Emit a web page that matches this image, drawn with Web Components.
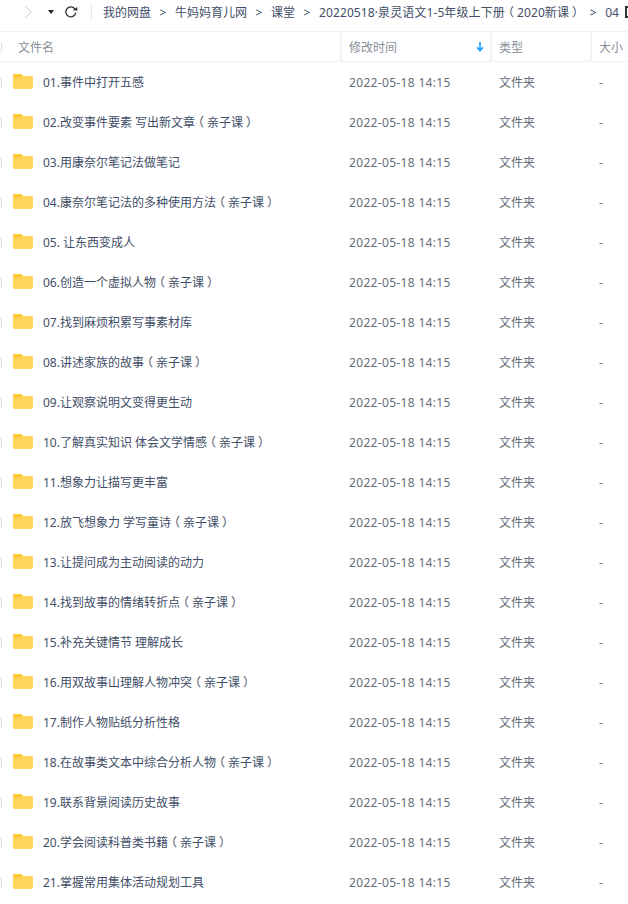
<!DOCTYPE html>
<html>
<head>
<meta charset="utf-8">
<style>
  html, body { margin: 0; height: 100%; overflow: hidden; background: #fff; }
  body { font-family: "Noto Sans", "Noto Sans CJK SC", sans-serif; font-size: 12px; }
</style>
</head>
<body>
<file-browser></file-browser>
<script>
const crumbs = ['我的网盘', '牛妈妈育儿网', '课堂', '20220518·泉灵语文1-5年级上下册（2020新课）', '04'];

const names = [
  '01.事件中打开五感',
  '02.改变事件要素 写出新文章（亲子课）',
  '03.用康奈尔笔记法做笔记',
  '04.康奈尔笔记法的多种使用方法（亲子课）',
  '05. 让东西变成人',
  '06.创造一个虚拟人物（亲子课）',
  '07.找到麻烦积累写事素材库',
  '08.讲述家族的故事（亲子课）',
  '09.让观察说明文变得更生动',
  '10.了解真实知识 体会文学情感（亲子课）',
  '11.想象力让描写更丰富',
  '12.放飞想象力 学写童诗（亲子课）',
  '13.让提问成为主动阅读的动力',
  '14.找到故事的情绪转折点（亲子课）',
  '15.补充关键情节 理解成长',
  '16.用双故事山理解人物冲突（亲子课）',
  '17.制作人物贴纸分析性格',
  '18.在故事类文本中综合分析人物（亲子课）',
  '19.联系背景阅读历史故事',
  '20.学会阅读科普类书籍（亲子课）',
  '21.掌握常用集体活动规划工具'
];

// the reference font centres full width brackets in their cell:
// halt makes them half width, the margins put the cell back
const parens = s => s.replace(/[（）]/g, '<span class="p">$&</span>');

class NavBar extends HTMLElement {
  constructor() {
    super();
    this.attachShadow({ mode: 'open' });
    const path = crumbs.map(c => `<span class="crumb">${parens(c)}</span>`).join('<i>&gt;</i>');
    this.shadowRoot.innerHTML = `
      <style>
        :host { display: flex; align-items: center; height: 24px; padding-bottom: 7px; border-bottom: 1px solid #eef0f2; white-space: nowrap; overflow: hidden; }
        .btns { display: flex; align-items: center; flex: none; width: 91px; height: 100%; }
        .fwd { margin-left: 25px; }
        .drop { margin-left: 16px; }
        .reload { margin-left: 11px; }
        .sep { flex: none; width: 1px; height: 16px; background: #e3e5e8; }
        .path { display: flex; align-items: center; padding-left: 11px; color: #424e67; }
        i { font-style: normal; width: 24px; text-align: center; }
        .crumb:nth-of-type(4) { letter-spacing: .1px; }
        .p { font-feature-settings: "halt"; margin: 0 3px; }
        .tail { flex: none; width: 8px; height: 12px; margin-left: 6px; box-sizing: border-box; border: 2px solid #333; background: #fff; }
      </style>
      <div class="btns">
        <svg class="fwd" width="7" height="12" viewBox="0 0 7 12"><path d="M.5 .5L6.500 6 .5 11.500" fill="none" stroke="#c9ccd1" stroke-width="1"/></svg>
        <svg class="drop" width="6" height="4" viewBox="0 0 6 4"><path d="M0 0h6L3 4z" fill="#222"/></svg>
        <svg class="reload" width="13" height="12" viewBox="0 0 13 12"><path d="M9.800 2.800A5 5 0 1 0 10.800 6.500" fill="none" stroke="#2b2f36" stroke-width="1.300"/><path d="M7.800 4.600h4.800L12 1z" fill="#2b2f36"/></svg>
      </div>
      <div class="sep"></div>
      <div class="path">${path}<b class="tail"></b></div>
    `;
  }
}

class ListHeader extends HTMLElement {
  constructor() {
    super();
    this.attachShadow({ mode: 'open' });
    this.shadowRoot.innerHTML = `
      <style>
        :host { display: grid; grid-template-columns: 340px 150px 100px 1fr; height: 29px; border-bottom: 1px solid #f1f2f4; color: #888e99; position: relative; }
        div { display: flex; align-items: center; padding-left: 7px; border-left: 2px solid #f1f2f4; white-space: nowrap; }
        div.first { border-left: 0; padding-left: 18px; }
        .time { justify-content: space-between; padding-right: 6px; }
        .check { position: absolute; left: -10px; top: 9px; width: 10px; height: 10px; border: 1px solid #dcdfe3; border-radius: 3px; background: #fff; }
      </style>
      <span class="check"></span>
      <div class="first">文件名</div>
      <div class="time">修改时间
        <svg width="8" height="10" viewBox="0 0 8 10"><path d="M4 0v8.500M1 5.300L4 8.800l3-3.500" fill="none" stroke="#1aa3ff" stroke-width="1.600"/></svg>
      </div>
      <div>类型</div>
      <div>大小</div>
    `;
  }
}

class FolderIcon extends HTMLElement {
  constructor() {
    super();
    this.attachShadow({ mode: 'open' });
    this.shadowRoot.innerHTML = `
      <style>:host { display: block; width: 20px; height: 15px; margin-top: -1px; line-height: 0; }</style>
      <svg width="20" height="15" viewBox="0 0 20 15">
        <path d="M1.500 0H7.500c.8 0 1.300.3 1.800.9L10.500 2.500V4H0V1.500C0 .6.6 0 1.500 0z" fill="#ffc933"/>
        <path d="M0 3.500H7.500L9.800 2H18.500c.9 0 1.500.6 1.500 1.500v10c0 .9-.6 1.500-1.500 1.500h-17C.6 15 0 14.400 0 13.500z" fill="#ffd659"/>
      </svg>
    `;
  }
}
customElements.define('folder-icon', FolderIcon);

class FileRow extends HTMLElement {
  constructor() {
    super();
    this.attachShadow({ mode: 'open' });
    this.shadowRoot.innerHTML = `
      <style>
        :host { display: grid; grid-template-columns: 340px 150px 100px 1fr; height: 40px; align-items: center; color: #666d7a; position: relative; white-space: nowrap; }
        .name { display: flex; align-items: center; gap: 10px; padding-left: 13px; color: #424e67; }
        .cell { padding-left: 9px; }
        .date { letter-spacing: .33px; }
        .check { position: absolute; left: -10px; top: 15px; width: 10px; height: 10px; border: 1px solid #dcdfe3; border-radius: 3px; background: #fff; }
        ::slotted(.p) { font-feature-settings: "halt"; margin: 0 3px; }
      </style>
      <span class="check"></span>
      <div class="name"><folder-icon></folder-icon><span><slot></slot></span></div>
      <div class="cell date">2022-05-18 14:15</div>
      <div class="cell">文件夹</div>
      <div class="cell">-</div>
    `;
  }
}

class FileBrowser extends HTMLElement {
  constructor() {
    super();
    this.attachShadow({ mode: 'open' });
    this.shadowRoot.innerHTML = `
      <style>
        :host { display: block; width: 628px; height: 904px; overflow: hidden; }
      </style>
      <nav-bar></nav-bar>
      <list-header></list-header>
      <div id="rows"></div>
    `;
    const rows = this.shadowRoot.getElementById('rows');
    names.forEach(n => {
      const r = document.createElement('file-row');
      r.innerHTML = parens(n);
      rows.appendChild(r);
    });
  }
}

customElements.define('nav-bar', NavBar);
customElements.define('list-header', ListHeader);
customElements.define('file-row', FileRow);
customElements.define('file-browser', FileBrowser);
</script>
</body>
</html>
